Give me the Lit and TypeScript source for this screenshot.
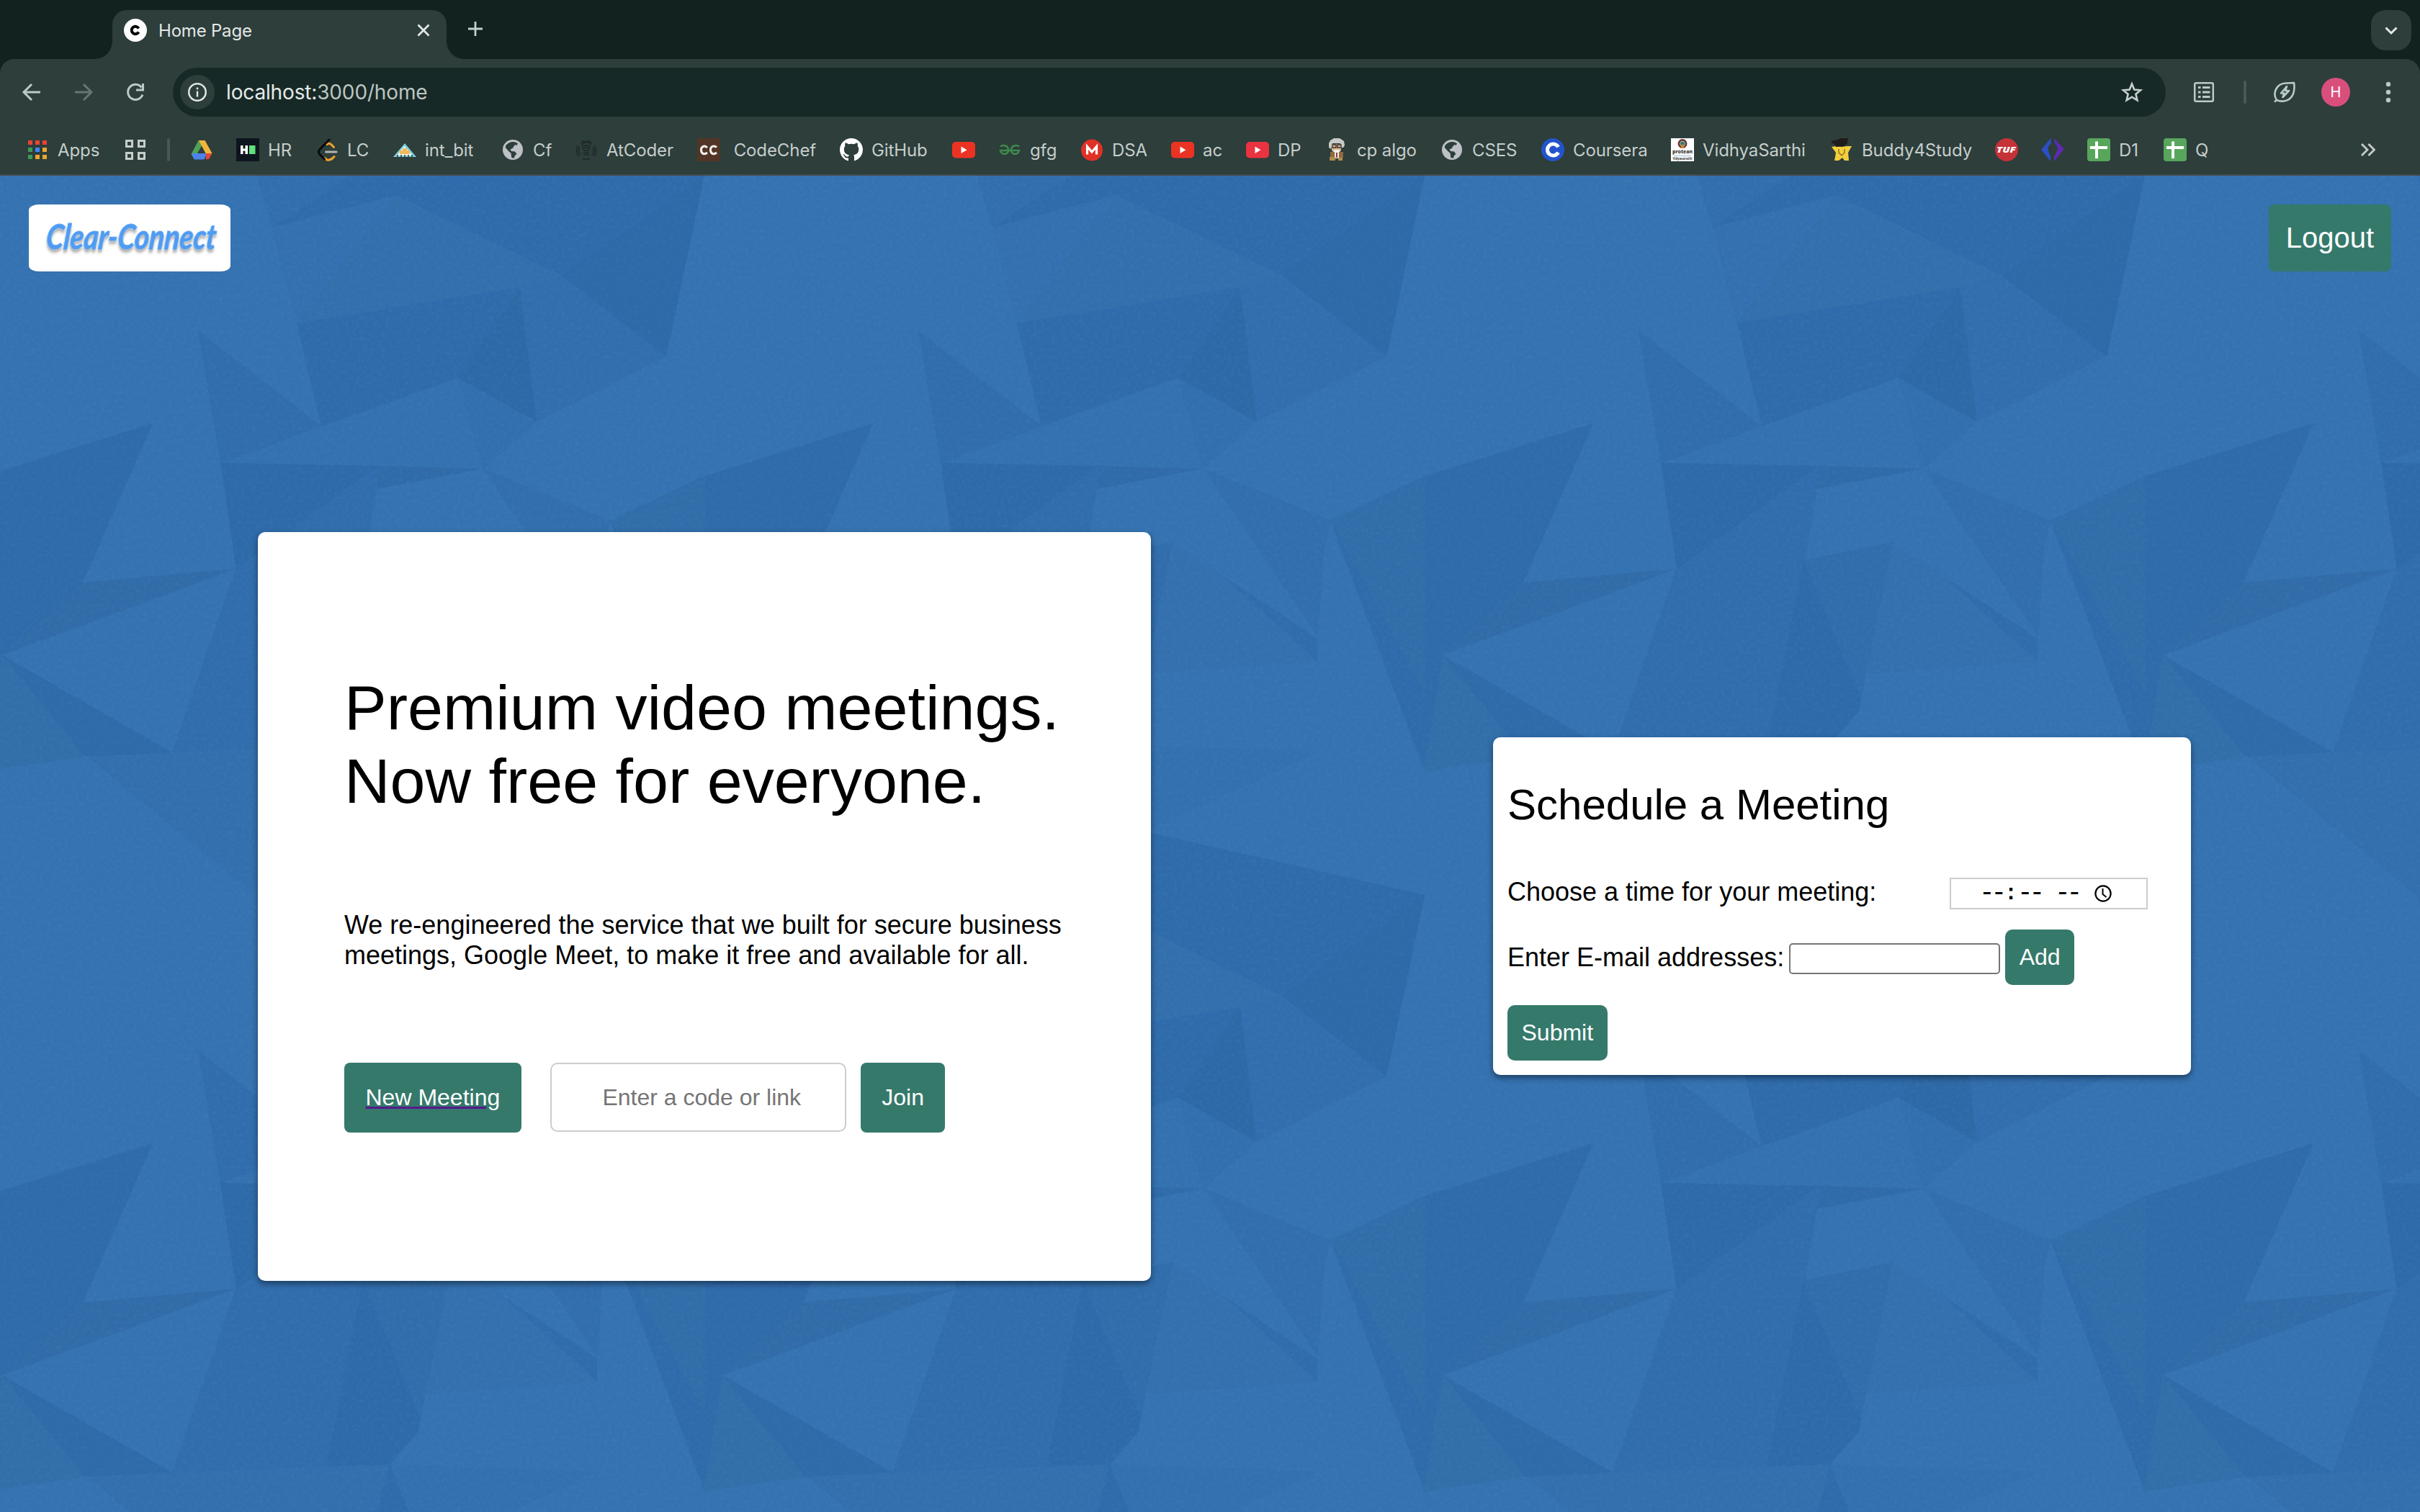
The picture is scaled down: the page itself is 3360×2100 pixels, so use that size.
import { LitElement, html, svg, css } from "lit";
import { customElement, property } from "lit/decorators.js";

/* ---------- icons (32 x 32 grid) ---------- */
const icons: Record<string, unknown> = {
  apps: svg`<g>
    <path fill="#ea4335" d="M3 3h6v6H3zM13 3h6v6h-6zM23 3h6v6h-6z"/>
    <path fill="#3f9a55" d="M3 13h6v6H3zM3 23h6v6H3z"/><path fill="#4285f4" d="M13 13h6v6h-6z"/>
    <path fill="#eba531" d="M23 13h6v6h-6zM13 23h6v6h-6zM23 23h6v6h-6z"/></g>`,
  grid: svg`<path fill="none" stroke="#c5cecb" stroke-width="3" d="M3.500 3.500h8v8h-8zM20.500 3.500h8v8h-8zM3.500 20.500h8v8h-8zM20.500 20.500h8v8h-8z"/>`,
  drive: svg`<path fill="#4fa255" d="M11.500 3h9L9 22.500 5.500 29 1.500 22z"/><path fill="#f2b53c" d="M12 3h8.500L30.500 21H21.500z"/><path fill="#4b83ee" d="M1.500 21h22l-4 8.500H6z"/><path fill="#e0483c" d="M21.500 21h9L26 29l-4 0.500z"/><path fill="#2d3e3b" d="M16 12l5 9H11z"/>`,
  hr: svg`<path fill="#0e141e" d="M0 0h32v32H0z"/><path fill="#fff" d="M6 10h3.500v4.500h3V10H16v12h-3.500v-4.500h-3V22H6z"/><path fill="#5fe07a" d="M18 10h8.500v12H18z"/>`,
  lc: svg`<g fill="none" stroke-linecap="round" stroke-width="3"><path stroke="#f0a030" d="M16 8.500c3-2.500 5-1 9.500 4M13 27.500c3 4 8 4 13-2"/><path stroke="#0a0a0a" d="M19 2L6 15.500c-2 2-2 5 0 7l6.500 6.500"/><path stroke="#b3b3b3" d="M14.500 19H29"/></g>`,
  bit: svg`<path fill="#7fd0dc" d="M16 7l16 19H0z"/><path fill="#f7f7ee" d="M15.500 11L27 24H5z"/><path fill="#f0b95c" d="M13 14h6v3h4v5H9v-5h4z"/><path stroke="#2d3e3b" stroke-width="1.500" d="M6 26v-3M11 26v-3M16 26v-3M21 26v-3M26 26v-3"/>`,
  globe: svg`<circle cx="16" cy="16" r="14" fill="#bdc1c6"/><path fill="#2d3e3b" d="M14 5.200c3.500-.8 7 .3 9 2.300l-2 3h-3.500l-1 3.500-4 1.200 1.500 2.800 5 .5 2.500 3.500-2.500 2-1 3.200c-3 .8-4.500-.5-4-2.500l-.5-4-3-2.500-4.500-5C5 10 9 6.200 14 5.200z"/><path fill="#bdc1c6" d="M20 8.500l5 6-4 5-6-5z" opacity=".85"/>`,
  at: svg`<g fill="none" stroke="#1f2827" stroke-width="1.800" opacity=".85"><path d="M11 6h10v4l-1 5c-2 3-6 3-8 0l-1-5zM9 8l2-4 5 1 5-1 2 4M13 10h6M13 13h6M4 10c-2 5-2 10 1 15M28 10c2 5 2 10-1 15M7 12c-2 4-2 8 1 11M25 12c2 4 2 8-1 11M12 19l8 5M20 19l-8 5M11 29h10"/></g>`,
  cc: svg`<path fill="#523527" d="M0 0h32v32H0z"/><path fill="none" stroke="#f4f1ee" stroke-width="3" d="M14 13c-4.500-4-9-1-8.500 4s5 6 8.500 3M27 12.500c-4.500-3.500-9-.5-8.500 4.500s5 6 8.500 3"/>`,
  github: svg`<path fill="#fff" transform="scale(2)" d="M8 0C3.580 0 0 3.580 0 8c0 3.540 2.290 6.530 5.470 7.590.4.070.55-.17.550-.38 0-.19-.01-.82-.01-1.490-2.010.37-2.530-.49-2.690-.94-.09-.23-.48-.94-.82-1.130-.28-.15-.68-.52-.01-.53.630-.01 1.080.58 1.230.82.720 1.210 1.870.87 2.330.66.070-.52.280-.87.510-1.070-1.780-.2-3.640-.89-3.640-3.950 0-.87.310-1.590.82-2.150-.08-.2-.36-1.020.080-2.120 0 0 .67-.21 2.200.82.640-.18 1.320-.27 2-.27s1.360.09 2 .27c1.530-1.040 2.200-.82 2.200-.82.440 1.100.160 1.920.080 2.120.510.560.82 1.270.82 2.150 0 3.070-1.870 3.750-3.650 3.950.29.250.54.730.54 1.480 0 1.070-.01 1.930-.01 2.200 0 .210.150.460.550.380A8.010 8.010 0 0 0 16 8c0-4.420-3.580-8-8-8z"/>`,
  yt: svg`<rect x="0" y="5" width="32" height="22.500" rx="5" fill="#ec3323"/><path fill="#fff" d="M12.500 11.500l8 4.700-8 4.700z"/>`,
  dp: svg`<rect x="0" y="5" width="32" height="22.500" rx="5" fill="#ea3340"/><path fill="#fff" d="M12.500 11.500l8 4.700-8 4.700z"/>`,
  gfg: svg`<path fill="none" stroke="#3f8a4b" stroke-width="2.600" d="M3 11.500c4-3 11-1.500 11 5S5 24 3 17h26c-2 7-11 6-11-.5s7-8 11-5"/>`,
  dsa: svg`<circle cx="16" cy="16.500" r="15" fill="#e03127"/><path fill="none" stroke="#fff" stroke-width="3.200" d="M9.500 22.500V11.500L16 19l6.500-7.500v11"/>`,
  cp: svg`<path fill="#c9c9c9" d="M5 7l2-4 5-3h8l6 4 1 6-2 3h-3l-1-6H10l-2 8-3-2z"/><path fill="#e0b48c" d="M9 8h13v9l-3 3h-7l-3-3z"/><path fill="none" stroke="#333" stroke-width="1.300" d="M10 9h5v4h-5zM17 9h5v4h-5z"/><path fill="#eee" d="M12 16h8v3h-8z"/><path fill="#8c6b3e" d="M7 19h18v8H7z"/><path fill="#e9e9e9" d="M13 19h6v9h-6z"/><path fill="#a33a33" d="M15 20h2v7h-2z"/><path fill="#b38c4a" d="M6 26h8v5H6zM18 27h6v4h-6z"/>`,
  coursera: svg`<circle cx="16" cy="16" r="16" fill="#2354cc"/><path fill="none" stroke="#fff" stroke-width="5" d="M23.500 12.200a8 8 0 1 0 0 7.600"/>`,
  vidya: svg`<path fill="#fff" d="M0 0h32v32H0z"/><circle cx="16" cy="7.500" r="5" fill="none" stroke="#6b3a3a" stroke-width="3"/><circle cx="16" cy="7.500" r="3" fill="#3b7a6a"/><path fill="#c98b2c" d="M14 9h4v5h-4z"/><path stroke="#9bd" d="M4 24.500h24"/><text x="16" y="21" text-anchor="middle" font-family="Open Sans" font-weight="700" font-size="7.500" textLength="28" lengthAdjust="spacingAndGlyphs" fill="#111">protean</text><text x="16" y="30" text-anchor="middle" font-family="Open Sans" font-weight="700" font-size="4.500" textLength="27" lengthAdjust="spacingAndGlyphs" fill="#333">Vidyasarathi</text>`,
  buddy: svg`<path fill="#f3cf3e" d="M2 12l6-1 8 1 7-1 7 0-5 9 1 11h-6l-3-4-5 4H6l2-11z"/><path fill="#201c1b" d="M1 6l3-3 7-1 3-2h12l-2 3v4l-5 4-11 1-2-4z"/><path fill="none" stroke="#7a6420" stroke-width="1.200" d="M12 15v5l4 4 4-4v-5"/>`,
  tuf: svg`<circle cx="16" cy="16" r="16" fill="#c53237"/><text x="15.500" y="20" text-anchor="middle" font-family="Open Sans" font-style="italic" font-weight="800" font-size="11" textLength="27" lengthAdjust="spacingAndGlyphs" fill="#fff">TUF</text>`,
  curly: svg`<path fill="#2c4fc4" d="M13 0L0 16l13 16V26l-3-9c-1-4 0-7 4-10z"/><path fill="#5d2bb0" d="M18 0l14 15-14 17v-6l4-8c2-4 0-8-3-10z"/>`,
  sheet: svg`<rect width="32" height="32" rx="4" fill="#58a65c"/><path fill="#fff" d="M11 4.500h4V11h13v4H15v13h-4V15H4v-4h7z"/>`,
};

interface Bookmark { start: number; icon: string; label?: string; }
const bookmarks: Bookmark[] = [
  { start: 36, icon: "apps", label: "Apps" },
  { start: 172, icon: "grid" },
  { start: 264, icon: "drive" },
  { start: 328, icon: "hr", label: "HR" },
  { start: 438, icon: "lc", label: "LC" },
  { start: 546, icon: "bit", label: "int_bit" },
  { start: 696, icon: "globe", label: "Cf" },
  { start: 798, icon: "at", label: "AtCoder" },
  { start: 968, icon: "cc", label: "\u00a0CodeChef" },
  { start: 1166, icon: "github", label: "GitHub" },
  { start: 1322, icon: "yt" },
  { start: 1386, icon: "gfg", label: "gfg" },
  { start: 1500, icon: "dsa", label: "DSA" },
  { start: 1626, icon: "yt", label: "ac" },
  { start: 1730, icon: "dp", label: "DP" },
  { start: 1840, icon: "cp", label: "cp algo" },
  { start: 2000, icon: "globe", label: "CSES" },
  { start: 2140, icon: "coursera", label: "Coursera" },
  { start: 2320, icon: "vidya", label: "VidhyaSarthi" },
  { start: 2541, icon: "buddy", label: "Buddy4Study" },
  { start: 2770, icon: "tuf" },
  { start: 2834, icon: "curly" },
  { start: 2898, icon: "sheet", label: "D1" },
  { start: 3004, icon: "sheet", label: "Q" },
  { start: 3272, icon: "end" },
];

/* ---------- browser frame ---------- */
@customElement("browser-bar")
class BrowserBar extends LitElement {
  static styles = css`
    :host { display: block; background: #11221f; font-family: Inter, Roboto, sans-serif; color: #c5cdcb; }
    svg { display: block; flex: none; }
    .strip { display: flex; height: 82px; padding: 14px 12px 0 156px; box-sizing: border-box; align-items: flex-start; }
    .tab { position: relative; display: flex; align-items: center; width: 464px; height: 68px; padding: 0 18px 12px 16px; box-sizing: border-box; background: #2d3e3b; border-radius: 20px 20px 0 0; }
    .flare { position: absolute; bottom: 0; width: 24px; height: 24px; }
    .flare-l { left: -24px; background: radial-gradient(circle at 0 0, transparent 23.5px, #2d3e3b 24px); }
    .flare-r { right: -24px; background: radial-gradient(circle at 100% 0, transparent 23.5px, #2d3e3b 24px); }
    .title { flex: 1; margin-left: 16px; font-size: 24px; letter-spacing: -0.2px; color: #e2e8e6; white-space: nowrap; }
    .plus { margin: 14px 0 0 28px; }
    .more { display: flex; align-items: center; justify-content: center; width: 56px; height: 56px; margin-left: auto; background: #2d3e3b; border-radius: 20px; }
    .frame { background: #2d3e3b; border-radius: 20px 20px 0 0; border-bottom: 2px solid #414a4b; }
    .toolbar { display: flex; align-items: center; height: 92px; padding-left: 8px; }
    .nav { display: flex; justify-content: center; width: 72px; }
    .omni { display: flex; align-items: center; width: 2767px; height: 68px; margin-left: 16px; padding: 0 31px 0 10px; box-sizing: border-box; background: #172927; border-radius: 34px; }
    .info { display: flex; align-items: center; justify-content: center; width: 48px; height: 48px; border-radius: 50%; background: #2d3e3b; }
    .url { flex: 1; margin-left: 16px; font-size: 28px; letter-spacing: -0.15px; color: #bcc5c2; white-space: nowrap; }
    .host { color: #e5eae8; }
    .tool { display: flex; justify-content: center; width: 56px; margin-left: 25px; }
    .divider { width: 4px; height: 32px; margin-left: 27px; border-radius: 2px; background: #46595a; }
    .avatar { width: 40px; height: 40px; margin-left: 23px; border-radius: 50%; background: #d94f7c; color: #fff; font-size: 20px; line-height: 40px; text-align: center; }
    .marks { display: flex; align-items: center; height: 68px; padding-left: 36px; }
    .mark { display: flex; align-items: center; flex: none; height: 32px; }
    .sep { width: 4px; height: 32px; margin-left: 28px; border-radius: 2px; background: #46595a; }
    .label { margin-left: 12px; font-size: 24px; letter-spacing: -0.1px; white-space: nowrap; }
  `;

  render() {
    return html`
      <div class="strip">
        <div class="tab">
          <span class="flare flare-l"></span><span class="flare flare-r"></span>
          <svg width="32" height="32" viewBox="0 0 32 32"><circle cx="16" cy="16" r="16" fill="#fff"/><path d="M20.500 13.500a5.200 5.200 0 1 0 0 5" fill="none" stroke="#000" stroke-width="4"/></svg>
          <span class="title">Home Page</span>
          <svg width="28" height="28" viewBox="0 0 28 28"><path d="M6.500 6.500l15 15M21.500 6.500l-15 15" stroke="#e2e8e6" stroke-width="2.800"/></svg>
        </div>
        <svg class="plus" width="24" height="24" viewBox="0 0 24 24"><path d="M12 2v20M2 12h20" stroke="#c3d0cd" stroke-width="2.800"/></svg>
        <div class="more"><svg width="24" height="24" viewBox="0 0 24 24"><path d="M4.500 8.500l7.500 7.500 7.500-7.500" fill="none" stroke="#e2e8e6" stroke-width="3"/></svg></div>
      </div>
      <div class="frame">
        <div class="toolbar">
          <div class="nav"><svg width="32" height="32" viewBox="0 0 32 32"><path d="M28 16H5.500M16 5L5 16l11 11" fill="none" stroke="#b9cbc7" stroke-width="3"/></svg></div>
          <div class="nav"><svg width="32" height="32" viewBox="0 0 32 32"><path d="M4 16h22.500M16 5l11 11-11 11" fill="none" stroke="#667673" stroke-width="3"/></svg></div>
          <div class="nav"><svg width="32" height="32" viewBox="0 0 32 32"><path d="M26 19.500A10.500 10.500 0 1 1 24.500 9.500M26.500 4v9h-9.500" fill="none" stroke="#b9cbc7" stroke-width="3"/></svg></div>
          <div class="omni">
            <div class="info"><svg width="28" height="28" viewBox="0 0 28 28"><circle cx="14" cy="14" r="11.800" fill="none" stroke="#e0e6e4" stroke-width="2.400"/><path d="M14 12.500v8M14 7.500v2.800" stroke="#e0e6e4" stroke-width="2.400"/></svg></div>
            <span class="url"><span class="host">localhost:</span>3000/home</span>
            <svg width="32" height="32" viewBox="0 0 32 32"><path d="M16 4.500l3.300 8 8.700.7-6.600 5.600 2 8.500L16 22.700l-7.400 4.600 2-8.500L4 13.200l8.700-.7z" fill="none" stroke="#c7d0ce" stroke-width="2.600"/></svg>
          </div>
          <div class="tool"><svg width="30" height="30" viewBox="0 0 30 30"><rect x="2.200" y="2.200" width="25.600" height="25.600" rx="2" fill="none" stroke="#b9cbc7" stroke-width="2.500"/><path d="M7 8.500h3.500M13 8.500h10.500M7 15h3.500M13 15h10.500M7 21.500h3.500M13 21.500h10.500" stroke="#b9cbc7" stroke-width="2.800"/></svg></div>
          <div class="divider"></div>
          <div class="tool"><svg width="34" height="34" viewBox="0 0 34 34"><path d="M6 28c-6-9-1-23 13-23.500l11-.5c1 7 1 13-3 19-5 7-14 8-21 5zM3 30.500l4-3.500M20 9l-8 9.500h4.500L14.500 24 23 15h-5z" fill="none" stroke="#b9cbc7" stroke-width="2.600" stroke-linejoin="round"/></svg></div>
          <div class="avatar">H</div>
          <div class="tool"><svg width="8" height="32" viewBox="0 0 8 32"><g fill="#b9cbc7"><circle cx="4" cy="5" r="3.200"/><circle cx="4" cy="16" r="3.200"/><circle cx="4" cy="27" r="3.200"/></g></svg></div>
        </div>
        <div class="marks">
          ${bookmarks.slice(0, -1).map((b, i) => html`
            <div class="mark" style="width:${bookmarks[i + 1].start - b.start}px">
              <svg width="32" height="32" viewBox="0 0 32 32">${icons[b.icon]}</svg>
              ${b.label ? html`<span class="label">${b.label}</span>` : ""}
              ${b.icon === "grid" ? html`<span class="sep"></span>` : ""}
            </div>`)}
          <svg width="32" height="32" viewBox="0 0 32 32"><path d="M7 8l8 8-8 8M16.500 8l8 8-8 8" fill="none" stroke="#c5cdcb" stroke-width="2.800"/></svg>
        </div>
      </div>`;
  }
}

/* ---------- faceted wallpaper, a 1000 px tile repeated ---------- */
const facets: [string, string][] = [
  ["#336fad", "120,806 239,801 541,790 486,1000 356,1000"],
  ["#326eae", "356,1000 486,1000 378,1072"],
  ["#2f6bab", "541,790 590,911 978,999 925,1251 780,1139 550,1027 378,1072 486,1000"],
  ["#2e69a8", "978,999 925,1251 780,1139"],
  ["#336fac", "378,72 550,27 780,139 722,155 412,205"],
  ["#3470b0", "378,72 550,27 412,205"],
  ["#2f6bab", "412,205 722,155 745,342 636,281 446,348"],
  ["#2e69a7", "722,155 745,342 636,281"],
  ["#326eae", "722,155 780,139 925,251 745,342"],
  ["#3471b0", "446,348 636,281 670,408 306,400"],
  ["#326fae", "636,281 745,342 670,408"],
  ["#316dad", "275,215 446,348 306,400"],
  ["#2e6aa9", "306,399 526,403 328,547"],
  ["#306ba9", "525,403 670,407 523,435"],
  ["#2f6aaa", "-21,417 212,344 115,565 3,666 -21,830"],
  ["#316ca9", "115,565 328,546 3,666"],
  ["#2f6aa9", "3,666 239,801 118,807"],
  ["#326ea9", "3,666 118,807 0,824 -24,829"],
  ["#2f6bab", "847,479 979,830 979,417"],
  ["#316da9", "847,479 979,417 979,720"],
  ["#316dad", "327,547 525,403 523,434 506,535 453,793 239,801"],
  ["#2e6aaa", "504,534 584,726 581,744 541,790 453,793"],
  ["#316dab", "504,534 628,509 584,726"],
  ["#326ead", "670,406 847,479 838,520 830,640"],
  ["#3470ae", "628,509 698,556 829,675 592,692"],
  ["#306cab", "698,556 829,643 829,675"],
  ["#3370af", "541,790 830,800 590,911"],
];

@customElement("facet-wall")
class FacetWall extends LitElement {
  static styles = css`:host, svg { display: block; }`;
  render() {
    const cells: number[][] = [];
    for (let y = -1; y < 2; y++) for (let x = 0; x < 5; x++) cells.push([x * 1000, y * 1000]);
    return html`<svg width="3360" height="1856" viewBox="0 0 3360 1856">
      <defs>
        <g id="tile">${facets.map(([fill, pts]) => svg`<polygon fill=${fill} points=${pts} />`)}</g>
        <filter id="grain" x="0" y="0" width="100%" height="100%">
          <feTurbulence type="fractalNoise" baseFrequency="0.2" numOctaves="2" seed="4" />
          <feColorMatrix values="0 0 0 0 0.15  0 0 0 0 0.38  0 0 0 0 0.55  0 1.600 0 0 -0.68" />
        </filter>
      </defs>
      <rect width="3360" height="1856" fill="#3572b1" />
      ${cells.map(([x, y]) => svg`<use href="#tile" x=${x} y=${y} />`)}
      <rect width="3360" height="1856" filter="url(#grain)" opacity="0.14" />
    </svg>`;
  }
}

/* ---------- green button ---------- */
@customElement("green-button")
class GreenButton extends LitElement {
  @property() size = "small";
  static styles = css`
    :host { display: block; flex: none; }
    .btn { display: block; margin: 0; border: 0; background: #35796b; color: #fff; font-family: "Liberation Sans", Arial, sans-serif; white-space: nowrap; }
    .small { height: 77px; padding: 0 19.5px; border-radius: 10px; font-size: 32px; }
    .medium { height: 97px; padding: 0 29.5px; border-radius: 8px; font-size: 32px; }
    .large { height: 93px; padding: 0 24px; border-radius: 8px; font-size: 40px; }
  `;
  render() { return html`<button class="btn ${this.size}"><slot></slot></button>`; }
}

@customElement("app-root")
export class AppRoot extends LitElement {
  static styles = css`
    :host { display: block; width: 3360px; height: 2100px; overflow: hidden; font-family: "Liberation Sans", Arial, sans-serif; color: #000; }
    .page { position: relative; height: 1856px; overflow: hidden; background: #3572b1; }
    .wall { position: absolute; inset: 0; }
    .content { position: relative; }
    .header { display: flex; justify-content: space-between; padding: 40px; }
    .logo { display: flex; align-items: center; justify-content: center; width: 280px; height: 93px; background: #fff; border-radius: 14px / 8px; }
    .logo-text { display: block; width: 244px; height: 80px; overflow: visible; }
    .main { display: flex; align-items: flex-start; padding: 322px 0 0 358px; }
    .card { box-sizing: border-box; background: #fff; border-radius: 10px; box-shadow: 0 4px 8px rgba(0,0,0,.45); }
    .hero { width: 1240px; height: 1040px; padding: 193px 120px 0; }
    .h1 { margin: 0; font-size: 88px; line-height: 102px; font-weight: 400; white-space: nowrap; }
    .lead { margin: 128px 0 0; font-size: 36px; line-height: 42px; white-space: nowrap; }
    .actions { display: flex; margin-top: 128px; }
    .link { color: #551a8b; text-decoration: underline; }
    .link-text { color: #fff; }
    .code { width: 411px; height: 96px; margin: 0 20px 0 40px; padding: 0 0 0 10px; box-sizing: border-box; border: 2px solid #ccc; border-radius: 10px; font: 32px "Liberation Sans", Arial, sans-serif; text-align: center; background: #fff; }
    .code::placeholder { color: #757575; opacity: 1; }
    .schedule { width: 969px; height: 469px; margin: 285px 0 0 475px; padding: 60px 20px 0; }
    .h2 { margin: 0; font-size: 60px; line-height: 68px; font-weight: 400; }
    .row { display: flex; align-items: center; font-size: 36px; white-space: nowrap; }
    .time-row { margin-top: 65px; height: 44px; }
    .time { display: flex; align-items: center; width: 275px; height: 44px; margin: 3px 40px 0 auto; box-sizing: border-box; border: 2px solid #ccc; padding-left: 39px; font: 30px/40px "Liberation Mono", monospace; }
    .part { width: 33px; font-size: 36px; letter-spacing: -5.1px; }
    .colon { margin-left: 2px; font-weight: 700; }
    .period { margin-left: 19px; }
    .clock { margin-left: 21px; }
    .mail-row { margin-top: 30px; height: 77px; }
    .mail { width: 293px; height: 43px; margin: 3px 7px 0 7px; box-sizing: border-box; border: 2px solid #767676; border-radius: 5px; background: #fff; }
    .submit { display: flex; margin-top: 28px; }
  `;

  render() {
    return html`
      <browser-bar></browser-bar>
      <div class="page">
        <facet-wall class="wall"></facet-wall>
        <div class="content">
          <div class="header">
            <div class="logo">
              <svg class="logo-text" viewBox="0 0 244 80">
                <defs><filter id="soft" x="-5%" y="-20%" width="110%" height="160%"><feDropShadow dx="0" dy="4" stdDeviation="2" flood-color="#000" flood-opacity="0.35"/></filter></defs>
                <g transform="translate(5 55) skewX(-5) scale(0.82 1)" filter="url(#soft)">
                  <text x="0" y="0" font-family="Lato" font-weight="700" font-style="italic" font-size="48" fill="#4f9cf2" stroke="#4f9cf2" stroke-width="0.800" textLength="288">Clear-Connect</text>
                </g>
              </svg>
            </div>
            <green-button size="large">Logout</green-button>
          </div>
          <div class="main">
            <section class="card hero">
              <h1 class="h1">Premium video meetings.<br />Now free for everyone.</h1>
              <p class="lead">We re-engineered the service that we built for secure business<br />meetings, Google Meet, to make it free and available for all.</p>
              <div class="actions">
                <green-button size="medium"><a class="link"><span class="link-text">New Meeting</span></a></green-button>
                <input class="code" placeholder="Enter a code or link" />
                <green-button size="medium">Join</green-button>
              </div>
            </section>
            <section class="card schedule">
              <h2 class="h2">Schedule a Meeting</h2>
              <div class="row time-row">
                <span>Choose a time for your meeting:</span>
                <div class="time">
                  <span class="part">--</span><span class="colon">:</span><span class="part">--</span><span class="part period">--</span>
                  <svg class="clock" width="26" height="26" viewBox="0 0 26 26"><circle cx="13" cy="13" r="10.600" fill="none" stroke="#000" stroke-width="2.200"/><path d="M12.500 6v8l5 4" fill="none" stroke="#000" stroke-width="2"/></svg>
                </div>
              </div>
              <div class="row mail-row">
                <span>Enter E-mail addresses:</span>
                <input class="mail" />
                <green-button>Add</green-button>
              </div>
              <div class="submit"><green-button>Submit</green-button></div>
            </section>
          </div>
        </div>
      </div>`;
  }
}
